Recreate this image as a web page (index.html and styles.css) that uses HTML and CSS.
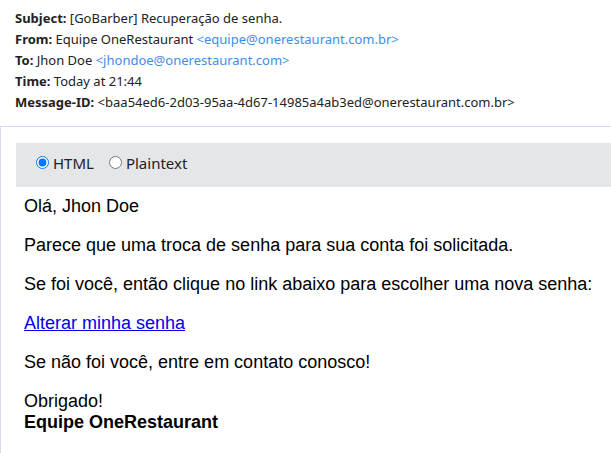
FILE: index.html
```html
<!DOCTYPE html>
<html lang="pt">
<head>
<meta charset="utf-8">
<title>Mensagem</title>
<link rel="stylesheet" href="styles.css">
</head>
<body>
<div class="headers">
  <div class="row"><span class="label">Subject:</span> [GoBarber] Recuperação de senha.</div>
  <div class="row"><span class="label">From:</span> Equipe OneRestaurant <span class="addr">&lt;equipe@onerestaurant.com.br&gt;</span></div>
  <div class="row"><span class="label">To:</span> Jhon Doe <span class="addr">&lt;jhondoe@onerestaurant.com&gt;</span></div>
  <div class="row"><span class="label">Time:</span> Today at 21:44</div>
  <div class="row"><span class="label">Message-ID:</span> &lt;baa54ed6-2d03-95aa-4d67-14985a4ab3ed@onerestaurant.com.br&gt;</div>
</div>
<div class="panel">
  <div class="tabs">
    <label class="opt"><input type="radio" name="view" checked>HTML</label>
    <label class="opt"><input type="radio" name="view">Plaintext</label>
  </div>
  <div class="mail">
    <p>Olá, Jhon Doe</p>
    <p>Parece que uma troca de senha para sua conta foi solicitada.</p>
    <p>Se foi você, então clique no link abaixo para escolher uma nova senha:</p>
    <p><a href="#">Alterar minha senha</a></p>
    <p>Se não foi você, entre em contato conosco!</p>
    <p class="sign">Obrigado!<br><strong>Equipe OneRestaurant</strong></p>
  </div>
</div>
</body>
</html>
```
FILE: styles.css
```css
html, body {
  margin: 0;
  padding: 0;
  background: #fff;
}
body {
  font-family: "Noto Sans", "Open Sans", sans-serif;
  font-size: 13px;
  color: #222;
  overflow: hidden;
}
.headers {
  padding: 8px 15px 0;
}
.row {
  line-height: 21px;
  white-space: nowrap;
}
.label {
  font-weight: bold;
}
.addr {
  color: #3b8eea;
}
.panel {
  margin-top: 13px;
  border-top: 1px solid #dcdae6;
  border-left: 1px solid #dcdae6;
  padding: 16px 0 0 15px;
}
.tabs {
  background: #e5e6e8;
  height: 44px;
  box-sizing: border-box;
  padding: 0 0 5px 20px;
  display: flex;
  align-items: center;
  gap: 15px;
  font-size: 15px;
  line-height: 20px;
}
.opt {
  display: flex;
  align-items: center;
}
.opt input {
  margin: 0 4px 0 0;
  width: 13px;
  height: 13px;
}
.mail {
  padding: 9px 8px 8px;
  font-family: "Liberation Sans", Arial, sans-serif;
  font-size: 18px;
  color: #000;
}
.mail p {
  margin: 18px 0;
  white-space: nowrap;
}
.mail p:first-child {
  margin-top: 0;
}
.mail a {
  color: #0000ee;
}
```
